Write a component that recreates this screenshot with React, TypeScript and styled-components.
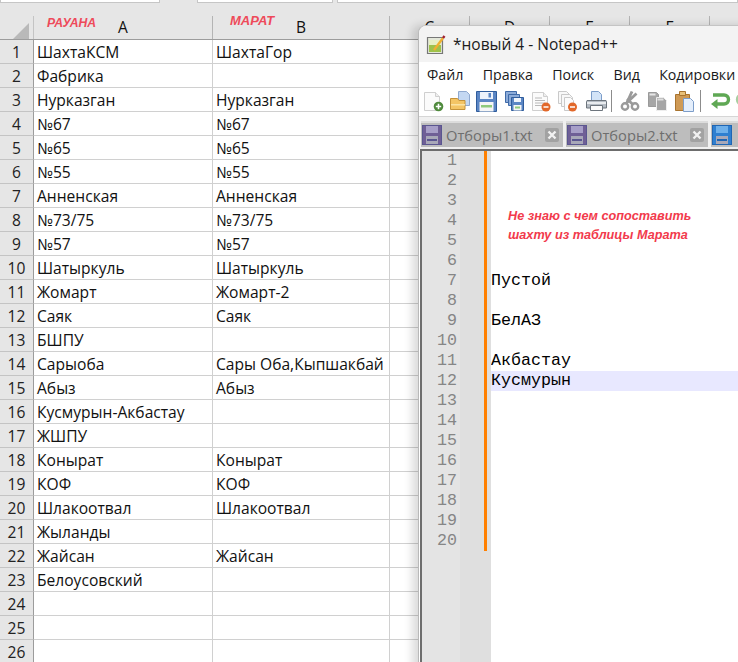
import React from "react";
import styled, { createGlobalStyle } from "styled-components";

const Global = createGlobalStyle`
  html, body { margin: 0; padding: 0; width: 738px; height: 662px; overflow: hidden; background: #e6e6e6; }
  #root { width: 738px; height: 662px; }
`;

const Page = styled.div`
  position: relative;
  width: 738px;
  height: 662px;
  overflow: hidden;
  background: #fff;
  font-family: "Open Sans", "Noto Sans", sans-serif;
`;

/* ---------- Spreadsheet ---------- */
const TopStrip = styled.div`
  height: 16px;
  background: #e6e6e6;
  display: flex;
  align-items: flex-start;
`;
const RibbonBox = styled.div<{ $w: number; $ml: number }>`
  width: ${(p) => p.$w}px;
  margin-left: ${(p) => p.$ml}px;
  height: 3px;
  background: #fff;
  border: 1px solid #c6c6c6;
  border-top: none;
  box-sizing: border-box;
`;
const HeaderRow = styled.div`
  display: flex;
  height: 24px;
  background: #e6e6e6;
  border-bottom: 1px solid #9c9c9c;
  box-sizing: border-box;
`;
const Corner = styled.div`
  position: relative;
  width: 34px;
  flex: none;
  box-sizing: border-box;
  border-right: 1px solid #c4c4c4;
`;
const CornerMark = styled.svg`
  position: absolute;
  right: 4px;
  bottom: 0;
`;
const ColHead = styled.div<{ $w: number }>`
  position: relative;
  width: ${(p) => p.$w}px;
  flex: none;
  box-sizing: border-box;
  border-right: 1px solid #b4b4b4;
  text-align: center;
  font-size: 15.5px;
  line-height: 23px;
  color: #111;
`;
const RedLabel = styled.span<{ $x: number; $y: number; $size: number }>`
  position: absolute;
  left: ${(p) => p.$x}px;
  top: ${(p) => p.$y}px;
  font-family: "Liberation Sans", sans-serif;
  font-weight: 700;
  font-style: italic;
  font-size: ${(p) => p.$size}px;
  line-height: 14px;
  color: #ee4a5a;
  white-space: nowrap;
`;
const Row = styled.div`
  display: flex;
  height: 24px;
`;
const RowHead = styled.div`
  width: 34px;
  flex: none;
  box-sizing: border-box;
  background: #e6e6e6;
  border-right: 1px solid #9c9c9c;
  border-bottom: 1px solid #c4c4c4;
  padding-top: 1px;
  text-align: center;
  font-size: 15.6px;
  line-height: 22px;
  color: #222;
`;
const Cell = styled.div<{ $w: number }>`
  width: ${(p) => p.$w}px;
  flex: none;
  box-sizing: border-box;
  border-right: 1px solid #d0d0d0;
  border-bottom: 1px solid #d0d0d0;
  padding: 1px 0 0 3px;
  font-size: 15.6px;
  line-height: 22px;
  color: #111;
  white-space: nowrap;
  overflow: hidden;
`;

/* ---------- Notepad++ window ---------- */
const Win = styled.div`
  position: absolute;
  left: 418px;
  top: 25px;
  width: 340px;
  height: 660px;
  background: #fff;
  border-top-left-radius: 8px;
  border-left: 1px solid #b9b9b9;
  border-top: 1px solid #c4c4c4;
  box-sizing: border-box;
  box-shadow: -6px 0 9px rgba(0, 0, 0, 0.14);
  display: flex;
  flex-direction: column;
  overflow: hidden;
`;
const TitleBar = styled.div`
  height: 36px;
  flex: none;
  background: #f3f3f3;
  display: flex;
  align-items: center;
  padding-left: 7px;
  gap: 6px;
  font-size: 15.5px;
  color: #1c1c1c;
  white-space: nowrap;
`;
const Menu = styled.div`
  height: 24px;
  flex: none;
  box-sizing: border-box;
  padding: 1px 0 0 8px;
  background: #fff;
  display: flex;
  align-items: center;
  gap: 19.3px;
  font-size: 14.2px;
  color: #1a1a1a;
  white-space: nowrap;
`;
const Toolbar = styled.div`
  height: 30px;
  flex: none;
  background: #fff;
  display: flex;
  align-items: center;
  padding-left: 4px;
  border-bottom: 1px solid #d6d6d6;
`;
const ToolIcon = styled.svg<{ $mr?: number }>`
  flex: none;
  width: 21px;
  height: 21px;
  margin-right: ${(p) => p.$mr ?? 6}px;
`;
const ToolSep = styled.div<{ $mr: number }>`
  width: 1px;
  height: 22px;
  background: #8c8c8c;
  flex: none;
  margin-right: ${(p) => p.$mr}px;
`;
const TabBar = styled.div`
  height: 32px;
  flex: none;
  background: #f0f0f0;
  display: flex;
  align-items: flex-end;
  padding: 0 0 2px 2px;
  box-sizing: border-box;
  gap: 3px;
`;
const Tab = styled.div`
  width: 142px;
  height: 26px;
  flex: none;
  box-sizing: border-box;
  background: #bdbdbd;
  border-top: 2px solid #dcdcdc;
  display: flex;
  align-items: center;
  padding-left: 1px;
  gap: 4px;
  font-size: 14.7px;
  color: #6e6e6e;
  white-space: nowrap;
`;
const TabClose = styled.div`
  width: 14px;
  height: 14px;
  margin-left: auto;
  margin-right: 4px;
  background: #a2a2a2;
  border-radius: 2px;
  color: #f2f2f2;
  display: flex;
  align-items: center;
  justify-content: center;
`;
const TabLast = styled(Tab)`
  width: 60px;
`;
const Editor = styled.div`
  flex: 1;
  display: flex;
  background: #fff;
  margin-left: 1px;
  border-left: 2px solid #6d6d6d;
  border-top: 2px solid #6d6d6d;
  position: relative;
`;
const LineNumbers = styled.div`
  width: 38px;
  flex: none;
  background: #e4e4e4;
`;
const LineNo = styled.div`
  height: 20px;
  line-height: 20px;
  text-align: right;
  padding-right: 3px;
  font-family: "Liberation Mono", monospace;
  font-size: 16.67px;
  color: #868686;
`;
const FoldMargin = styled.div`
  width: 31px;
  flex: none;
  background: #dfdfdf;
  position: relative;
`;
const ChangeBar = styled.div`
  position: absolute;
  left: 24px;
  top: 0;
  width: 3px;
  height: 400px;
  background: #ff8000;
`;
const Code = styled.div`
  flex: 1;
`;
const CodeLine = styled.div<{ $active?: boolean }>`
  height: 20px;
  line-height: 20px;
  font-family: "Liberation Mono", monospace;
  font-size: 16.67px;
  color: #000;
  white-space: pre;
  background: ${(p) => (p.$active ? "#e8e8ff" : "transparent")};
`;
const Note = styled.div`
  position: absolute;
  left: 86px;
  top: 56px;
  font-family: "Liberation Sans", sans-serif;
  font-weight: 700;
  font-style: italic;
  font-size: 12.7px;
  line-height: 18.5px;
  color: #f23a4c;
  white-space: nowrap;
`;

/* ---------- Drawn icons ---------- */
const Floppy = ({ c = "#6f5f96", d = "#5a5690", f = "#a79fc8" }: { c?: string; d?: string; f?: string }) => (
  <svg width="20" height="20" viewBox="0 0 20 20">
    <path d="M0 0h20v20H0z" fill={d} />
    <path d="M1 1h18v18H1z" fill={c} />
    <path d="M4 1h12v7H4z" fill={f} />
    <path d="M4 11h12v8H4z" fill="#a8a8b8" />
    <path d="M5 14h10v2H5z" fill={d} />
  </svg>
);

const Close = () => (
  <svg width="10" height="10" viewBox="0 0 10 10">
    <path d="M1.500 1.500l7 7M8.500 1.500l-7 7" stroke="currentColor" strokeWidth="2.400" />
  </svg>
);

const Page1 = ({ lines }: { lines?: boolean }) => (
  <>
    <path d="M1.500 1.500h11l4 4v14h-15z" fill="#fbfbfb" stroke="#cfcfcf" />
    <path d="M12.500 1.500v4h4" fill="#eee" stroke="#cfcfcf" />
    {lines && <path d="M4 7h7M4 9.500h10M4 12h10M4 14.500h7" stroke="#b9b9b9" strokeWidth="1" />}
  </>
);

const IconNew = () => (
  <ToolIcon viewBox="0 0 21 21" $mr={6}>
    <Page1 />
    <circle cx="15.500" cy="15.500" r="4.800" fill="#4f8a3c" />
    <path d="M15.500 12.800v5.400M12.800 15.500h5.400" stroke="#fff" strokeWidth="1.600" />
  </ToolIcon>
);
const IconOpen = () => (
  <ToolIcon viewBox="0 0 21 21" $mr={5}>
    <path d="M8.500 0.500h8l3 3v11h-11z" fill="#c4d8f2" stroke="#8fa9cf" />
    <path d="M0.500 7.500h7l1.500 2h6v9h-14.500z" fill="#f4c565" stroke="#c4923a" />
    <path d="M1 13h14v1.500H1z" fill="#fbe3a4" />
  </ToolIcon>
);
const IconSave = () => (
  <ToolIcon viewBox="0 0 21 21" $mr={8}>
    <path d="M.500.500h20v20h-20z" fill="#5b86c4" stroke="#2f5c9c" />
    <path d="M4 1h13v7H4z" fill="#eef3fb" />
    <path d="M12.500 2h2.500v4.500h-2.500z" fill="#5b86c4" />
    <path d="M3.500 11h14v9.500h-14z" fill="#f6f6f6" />
    <path d="M5 14h11v2.500H5z" fill="#8fca7c" />
  </ToolIcon>
);
const IconSaveAll = () => (
  <ToolIcon viewBox="0 0 21 21" $mr={5}>
    <path d="M.500.500h11v11h-11z" fill="#8cabd8" stroke="#3f6aa8" />
    <path d="M3.500 3.500h11v11h-11z" fill="#8cabd8" stroke="#3f6aa8" />
    <path d="M6.500 6.500h12v13h-12z" fill="#5b86c4" stroke="#2f5c9c" />
    <path d="M9 7h7v4H9z" fill="#eef3fb" />
    <path d="M8.500 14h8v5.500h-8z" fill="#f6f6f6" />
    <path d="M10 15.500h5v2h-5z" fill="#8fca7c" />
  </ToolIcon>
);
const IconCloseDoc = () => (
  <ToolIcon viewBox="0 0 21 21" $mr={5}>
    <Page1 lines />
    <circle cx="15" cy="16" r="4.500" fill="#e2682a" />
    <path d="M12.500 16h5" stroke="#fff" strokeWidth="1.600" />
  </ToolIcon>
);
const IconCloseAll = () => (
  <ToolIcon viewBox="0 0 21 21" $mr={8}>
    <path d="M1.500.500h8l3 3v9h-11z" fill="#f8f8f8" stroke="#c9c9c9" />
    <path d="M4.500 3.500h8l3 3v9h-11z" fill="#f8f8f8" stroke="#c9c9c9" />
    <path d="M7.500 6.500h6l3 3v10h-9z" fill="#fbfbfb" stroke="#c9c9c9" />
    <circle cx="15.500" cy="16" r="4.500" fill="#e2682a" />
    <path d="M13 16h5" stroke="#fff" strokeWidth="1.600" />
  </ToolIcon>
);
const IconPrint = () => (
  <ToolIcon viewBox="0 0 21 21" $mr={4}>
    <path d="M5.500.500h7l3 3v7h-10z" fill="#d3e4f8" stroke="#7c9dc9" />
    <path d="M1 9.500h19a1 1 0 0 1 .500 1v6.500h-20v-6.500z" fill="#b5bcc4" stroke="#6d757d" />
    <path d="M1 11h19v2H1z" fill="#e9ecef" />
    <path d="M4.500 14.500h12v5h-12z" fill="#fbfbfb" stroke="#6d757d" />
  </ToolIcon>
);
const IconCut = () => (
  <ToolIcon viewBox="0 0 21 21" $mr={6}>
    <path d="M12 .500l-5 11M16.500 2.500l-10.500 10" stroke="#9a9a9a" strokeWidth="2.800" fill="none" />
    <path d="M7 8l6.500 6" stroke="#9a9a9a" strokeWidth="2.800" />
    <circle cx="5" cy="15.500" r="3.200" fill="none" stroke="#9a9a9a" strokeWidth="2.400" />
    <circle cx="15" cy="15.500" r="3.200" fill="none" stroke="#9a9a9a" strokeWidth="2.400" />
  </ToolIcon>
);
const IconCopy = () => (
  <ToolIcon viewBox="0 0 21 21" $mr={6}>
    <path d="M1.500 1.500h8l2 2v12h-10z" fill="#a6a6a6" stroke="#9a9a9a" />
    <path d="M2.500 2.500h6v2h-6z" fill="#e6e6e6" />
    <path d="M9.500 6.500h7l3 3v10h-10z" fill="#a6a6a6" stroke="#eee" />
    <path d="M10.500 7.500h6v2h-6z" fill="#dedede" />
  </ToolIcon>
);
const IconPaste = () => (
  <ToolIcon viewBox="0 0 21 21" $mr={5}>
    <path d="M1.500 3.500h14v16h-14z" fill="#cf9a55" stroke="#a9742f" />
    <path d="M5.500 .500h6v4h-6z" fill="#e8c078" stroke="#a9742f" />
    <path d="M9.500 7.500h7l3 3v10h-10z" fill="#e4eefb" stroke="#7c9dc9" />
  </ToolIcon>
);
const IconUndo = () => (
  <ToolIcon viewBox="0 0 21 21" $mr={4}>
    <path d="M3 4h11a4.500 4.500 0 0 1 0 9H6" fill="none" stroke="#5fa854" strokeWidth="3.400" />
    <path d="M7.500 8l-6.500 5 6.500 5z" fill="#5fa854" />
  </ToolIcon>
);
const IconRedo = () => (
  <ToolIcon viewBox="0 0 21 21" $mr={6}>
    <path d="M17 4H7a4.500 4.500 0 0 0 0 9h9" fill="none" stroke="#a9cfa2" strokeWidth="3.400" />
  </ToolIcon>
);
const AppIcon = () => (
  <svg width="21" height="21" viewBox="0 0 21 21" style={{ flex: "none" }}>
    <path d="M1.500 3.500h15v16h-15z" fill="#e4e8da" stroke="#777" strokeWidth="1.200" />
    <path d="M3 6h12v12H3z" fill="#9ec24a" />
    <path d="M3 6h12v5H3z" fill="#e8f0c4" />
    <path d="M8 16L17 4" stroke="#f0b030" strokeWidth="2.400" />
    <path d="M17 4l1.500-2" stroke="#a02030" strokeWidth="2.400" />
  </svg>
);

const COLS = [179, 177, 80, 80, 80, 80, 80];
const NAMES = ["A", "B", "C", "D", "E", "F", ""];
const DATA: [string, string][] = [
  ["ШахтаКСМ", "ШахтаГор"],
  ["Фабрика", ""],
  ["Нурказган", "Нурказган"],
  ["№67", "№67"],
  ["№65", "№65"],
  ["№55", "№55"],
  ["Анненская", "Анненская"],
  ["№73/75", "№73/75"],
  ["№57", "№57"],
  ["Шатыркуль", "Шатыркуль"],
  ["Жомарт", "Жомарт-2"],
  ["Саяк", "Саяк"],
  ["БШПУ", ""],
  ["Сарыоба", "Сары Оба,Кыпшакбай"],
  ["Абыз", "Абыз"],
  ["Кусмурын-Акбастау", ""],
  ["ЖШПУ", ""],
  ["Конырат", "Конырат"],
  ["КОФ", "КОФ"],
  ["Шлакоотвал", "Шлакоотвал"],
  ["Жыланды", ""],
  ["Жайсан", "Жайсан"],
  ["Белоусовский", ""],
  ["", ""],
  ["", ""],
  ["", ""],
];
const CODE: Record<number, string> = { 7: "Пустой", 9: "БелАЗ", 11: "Акбастау", 12: "Кусмурын" };
const LINES = Array.from({ length: 20 }, (_, i) => i + 1);

export default function App() {
  return (
    <Page>
      <Global />
      <TopStrip>
        <RibbonBox $w={160} $ml={0} />
        <RibbonBox $w={136} $ml={37} />
        <RibbonBox $w={401} $ml={4} />
      </TopStrip>
      <HeaderRow>
        <Corner>
          <CornerMark width="16" height="16" viewBox="0 0 16 16">
            <path d="M16 0v16H0z" fill="#b9b9b9" />
          </CornerMark>
        </Corner>
        {COLS.map((w, i) => (
          <ColHead key={i} $w={w}>
            {NAMES[i]}
            {i === 0 && <RedLabel $x={13} $y={0} $size={12.2}>РАУАНА</RedLabel>}
            {i === 1 && <RedLabel $x={17} $y={-2} $size={13}>МАРАТ</RedLabel>}
          </ColHead>
        ))}
      </HeaderRow>
      {DATA.map(([a, b], i) => (
        <Row key={i}>
          <RowHead>{i + 1}</RowHead>
          <Cell $w={COLS[0]}>{a}</Cell>
          <Cell $w={COLS[1]}>{b}</Cell>
          {COLS.slice(2).map((w, j) => (
            <Cell key={j} $w={w} />
          ))}
        </Row>
      ))}

      <Win>
        <TitleBar>
          <AppIcon />
          <span>*новый 4 - Notepad++</span>
        </TitleBar>
        <Menu>
          <span>Файл</span>
          <span>Правка</span>
          <span>Поиск</span>
          <span>Вид</span>
          <span>Кодировки</span>
        </Menu>
        <Toolbar>
          <IconNew />
          <IconOpen />
          <IconSave />
          <IconSaveAll />
          <IconCloseDoc />
          <IconCloseAll />
          <IconPrint />
          <ToolSep $mr={8} />
          <IconCut />
          <IconCopy />
          <IconPaste />
          <ToolSep $mr={9} />
          <IconUndo />
          <IconRedo />
        </Toolbar>
        <TabBar>
          <Tab>
            <Floppy />
            <span>Отборы1.txt</span>
            <TabClose><Close /></TabClose>
          </Tab>
          <Tab>
            <Floppy />
            <span>Отборы2.txt</span>
            <TabClose><Close /></TabClose>
          </Tab>
          <TabLast>
            <Floppy c="#2f7fd0" d="#1f66b4" f="#6fb0ea" />
          </TabLast>
        </TabBar>
        <Editor>
          <LineNumbers>
            {LINES.map((n) => (
              <LineNo key={n}>{n}</LineNo>
            ))}
          </LineNumbers>
          <FoldMargin>
            <ChangeBar />
          </FoldMargin>
          <Code>
            {LINES.map((n) => (
              <CodeLine key={n} $active={n === 12}>
                {CODE[n] ?? " "}
              </CodeLine>
            ))}
          </Code>
          <Note>
            Не знаю с чем сопоставить
            <br />
            шахту из таблицы Марата
          </Note>
        </Editor>
      </Win>
    </Page>
  );
}
